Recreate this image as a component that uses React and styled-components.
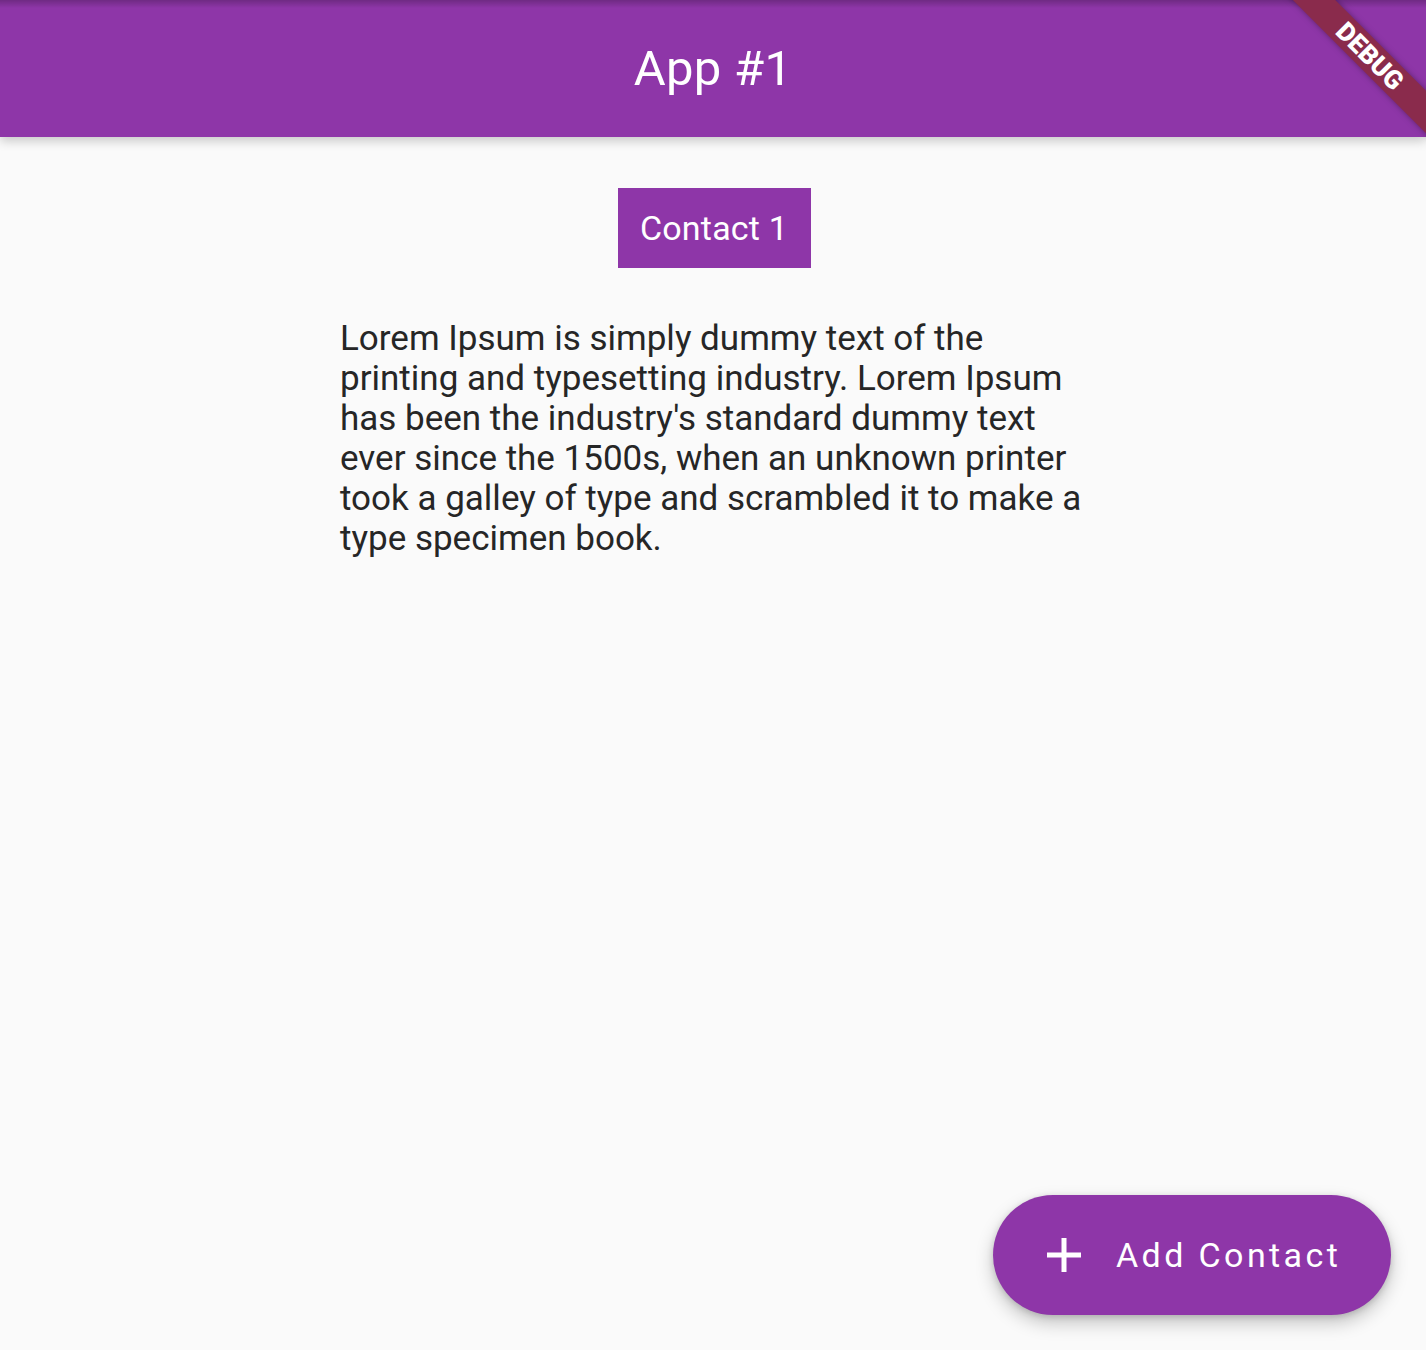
import styled, { createGlobalStyle } from "styled-components";

const GlobalStyle = createGlobalStyle`
  html, body {
    margin: 0;
    padding: 0;
    background: #fafafa;
    font-family: Roboto, "Noto Sans", sans-serif;
  }
`;

const PURPLE = "#8e36a8";

export default function App() {
  return (
    <StyledScreen>
      <GlobalStyle />
      <StyledAppBar>
        <h1>App #1</h1>
      </StyledAppBar>
      <StyledBody>
        <StyledContactButton>Contact 1</StyledContactButton>
        <StyledText>
          Lorem Ipsum is simply dummy text of the printing and typesetting
          industry. Lorem Ipsum has been the industry's standard dummy text
          ever since the 1500s, when an unknown printer took a galley of type
          and scrambled it to make a type specimen book.
        </StyledText>
      </StyledBody>
      <StyledFab>
        <svg width="38" height="38" viewBox="0 0 38 38">
          <path d="M19 2v34M2 19h34" stroke="#fff" strokeWidth="5" />
        </svg>
        <span>Add Contact</span>
      </StyledFab>
      <StyledBannerClip>
        <StyledBanner>DEBUG</StyledBanner>
      </StyledBannerClip>
    </StyledScreen>
  );
}

const StyledScreen = styled.div`
  position: relative;
  width: 1426px;
  height: 1350px;
  overflow: hidden;
  background: #fafafa;
`;

const StyledAppBar = styled.header`
  height: 137px;
  background: ${PURPLE};
  background-image: linear-gradient(
    to bottom,
    rgba(0, 0, 0, 0.22) 0px,
    rgba(0, 0, 0, 0) 8px
  );
  display: flex;
  align-items: center;
  justify-content: center;
  box-shadow: 0 4px 10px rgba(0, 0, 0, 0.2);
  position: relative;
  z-index: 1;

  h1 {
    margin: 0;
    color: #fff;
    font-weight: 400;
    font-size: 49px;
    letter-spacing: 0.3px;
  }
`;

const StyledBody = styled.main`
  display: flex;
  flex-direction: column;
  align-items: center;
  padding-top: 51px;
`;

const StyledContactButton = styled.button`
  all: unset;
  background: ${PURPLE};
  color: #fff;
  height: 80px;
  width: 193px;
  margin-left: 2px;
  display: flex;
  align-items: center;
  justify-content: center;
  font-family: Roboto, sans-serif;
  font-size: 34px;
  letter-spacing: 0.2px;
`;

const StyledText = styled.p`
  margin: 51px 0 0;
  width: 746px;
  color: #262626;
  font-size: 35px;
  line-height: 40px;
`;

const StyledFab = styled.button`
  all: unset;
  position: absolute;
  left: 993px;
  top: 1195px;
  width: 398px;
  height: 120px;
  border-radius: 60px;
  background: ${PURPLE};
  box-shadow: 0 8px 18px rgba(0, 0, 0, 0.22), 0 2px 6px rgba(0, 0, 0, 0.15);
  display: flex;
  align-items: center;
  padding-left: 52px;
  box-sizing: border-box;
  gap: 33px;
  color: #fff;

  span {
    font-family: Roboto, sans-serif;
    font-size: 34px;
    letter-spacing: 3.4px;
  }
`;

const StyledBannerClip = styled.div`
  position: absolute;
  top: 0;
  right: 0;
  width: 180px;
  height: 180px;
  overflow: hidden;
  z-index: 2;
  pointer-events: none;
`;

const StyledBanner = styled.div`
  position: absolute;
  left: 124px;
  top: 56px;
  width: 300px;
  height: 30px;
  margin-left: -150px;
  margin-top: -15px;
  transform: rotate(45deg);
  transform-origin: center;
  background: #8a2b4c;
  box-shadow: 0 0 6px rgba(0, 0, 0, 0.35);
  color: #fff;
  font-family: Roboto, sans-serif;
  font-weight: 900;
  font-size: 26px;
  line-height: 30px;
  text-align: center;
`;
